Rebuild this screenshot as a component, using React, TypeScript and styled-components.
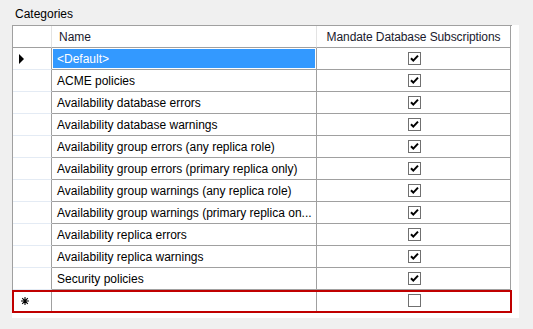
import React from 'react';
import styled, { createGlobalStyle } from 'styled-components';

const GlobalStyle = createGlobalStyle`
  html, body {
    margin: 0;
    padding: 0;
    background: #f0f0f0;
  }
  body {
    font-family: "Liberation Sans", Arial, sans-serif;
    font-size: 12px;
    color: #000;
  }
`;

const Page = styled.div`
  width: 533px;
  height: 329px;
  padding: 0 0 0 12px;
  box-sizing: border-box;
`;

const Caption = styled.div`
  height: 25px;
  padding: 7px 0 0 3px;
  box-sizing: border-box;
  line-height: 15px;
  color: #000;
`;

const Surface = styled.div`
  width: 507px;
  height: 293px;
  background: #fff;
`;

const Grid = styled.div`
  width: 500px;
  border-top: 1px solid #a0a0a0;
  border-left: 1px solid #a0a0a0;
  box-sizing: border-box;
`;

const Row = styled.div<{ $newRow?: boolean }>`
  display: grid;
  grid-template-columns: 39px 265px 194px;
  height: 22px;
  position: relative;

  &::after {
    content: '';
    display: ${(p) => (p.$newRow ? 'block' : 'none')};
    position: absolute;
    top: 0;
    bottom: -1px;
    left: -1px;
    right: 0;
    border: 2px solid #c00000;
    pointer-events: none;
  }
`;

const HeaderRow = styled(Row)`
  background: #fff;
`;

const HeaderCell = styled.div<{ $center?: boolean }>`
  border-right: 1px solid ${(p) => (p.$center ? '#a0a0a0' : '#e3e3e3')};
  border-bottom: 1px solid #a0a0a0;
  display: flex;
  align-items: center;
  justify-content: ${(p) => (p.$center ? 'center' : 'flex-start')};
  padding: ${(p) => (p.$center ? '1px 0 0 0' : '1px 0 0 7px')};
  letter-spacing: ${(p) => (p.$center ? '-0.1px' : '0')};
  color: #1a1a2e;
  white-space: nowrap;
`;

const RowHeader = styled.div`
  border-right: 1px solid #a0a0a0;
  border-bottom: 1px solid #e4ebf4;
  display: flex;
  align-items: center;
  padding-left: 6px;
`;

const NameCell = styled.div<{ $selected?: boolean }>`
  border-right: 1px solid #a0a0a0;
  border-bottom: 1px solid #a0a0a0;
  display: flex;
  align-items: center;
  padding: 1px 0 0 5px;
  background: ${(p) => (p.$selected ? '#3399ff' : '#fff')};
  box-shadow: ${(p) => (p.$selected ? 'inset 0 0 0 1px #fff' : 'none')};
  color: ${(p) => (p.$selected ? '#fff' : '#000')};
  white-space: nowrap;
  overflow: hidden;
`;

const CheckCell = styled.div`
  border-right: 1px solid #a0a0a0;
  border-bottom: 1px solid #a0a0a0;
  display: flex;
  align-items: center;
  justify-content: center;
`;

const Box = styled.div`
  width: 13px;
  height: 13px;
  box-sizing: border-box;
  border: 1px solid #707070;
  background: #fff;
  display: flex;
  align-items: center;
  justify-content: center;
  margin-left: 1px;
`;

const Arrow = styled.div`
  width: 0;
  height: 0;
  border-top: 5px solid transparent;
  border-bottom: 5px solid transparent;
  border-left: 5px solid #000;
`;

const CheckBox: React.FC<{ checked: boolean }> = ({ checked }) => (
  <Box>
    {checked && (
      <svg width="11" height="11" viewBox="0 0 11 11">
        <path d="M2 5.2 L4.3 7.6 L9 2.6" fill="none" stroke="#000" strokeWidth="2" />
      </svg>
    )}
  </Box>
);

// new-row marker of the grid
const StarIcon = () => (
  <svg width="10" height="10" viewBox="0 0 10 10" style={{ marginLeft: 1, marginTop: 1 }}>
    <path
      d="M5 1 V9 M1 5 H9 M2.2 2.2 L7.8 7.8 M7.8 2.2 L2.2 7.8"
      stroke="#000"
      strokeWidth="1.1"
      fill="none"
    />
  </svg>
);

const categories = [
  '<Default>',
  'ACME policies',
  'Availability database errors',
  'Availability database warnings',
  'Availability group errors (any replica role)',
  'Availability group errors (primary replica only)',
  'Availability group warnings (any replica role)',
  'Availability group warnings (primary replica on...',
  'Availability replica errors',
  'Availability replica warnings',
  'Security policies',
];

const App: React.FC = () => {
  return (
    <Page>
      <GlobalStyle />
      <Caption>Categories</Caption>
      <Surface>
        <Grid>
          <HeaderRow>
            <HeaderCell />
            <HeaderCell>Name</HeaderCell>
            <HeaderCell $center>Mandate Database Subscriptions</HeaderCell>
          </HeaderRow>
          {categories.map((name, i) => (
            <Row key={name}>
              <RowHeader>{i === 0 && <Arrow />}</RowHeader>
              <NameCell $selected={i === 0}>{name}</NameCell>
              <CheckCell>
                <CheckBox checked />
              </CheckCell>
            </Row>
          ))}
          <Row $newRow>
            <RowHeader>
              <StarIcon />
            </RowHeader>
            <NameCell />
            <CheckCell>
              <CheckBox checked={false} />
            </CheckCell>
          </Row>
        </Grid>
      </Surface>
    </Page>
  );
};

export default App;
